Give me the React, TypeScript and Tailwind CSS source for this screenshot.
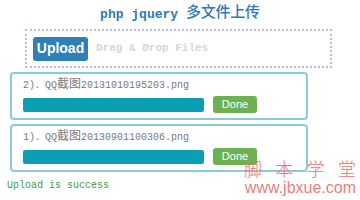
export default function App() {
  const files = [
    { n: "2)", date: "20131010195203" },
    { n: "1)", date: "20130901100306" },
  ];

  return (
    <div className="relative h-[200px] w-[360px] overflow-hidden bg-white">
      <h1 className="flex h-[29px] items-center justify-center font-['Liberation_Mono','Noto_Sans_CJK_SC',monospace] font-bold text-[#2b7bb9]">
        <span className="text-[13px]">php jquery&nbsp;</span>
        <span className="text-[15px] font-medium tracking-[-0.2px]">多文件上传</span>
      </h1>

      <div className="ml-[25px] flex h-[39px] w-[307px] items-center gap-[8px] border-2 border-dotted border-[#bdb8d8] px-[6px]">
        <button className="h-[24px] w-[55px] rounded-[3px] bg-[#2e80b8] font-['Liberation_Sans',sans-serif] text-[14px] font-bold text-white">
          Upload
        </button>
        <span className="font-['Liberation_Mono',monospace] text-[11px] font-bold text-[#d6d6d6]">
          Drag &amp; Drop Files
        </span>
      </div>

      <div className="mt-[4px] flex flex-col gap-[4px]">
        {files.map((f) => (
          <div
            key={f.n}
            className="ml-[10px] h-[48px] w-[298px] rounded-[4px] border-2 border-[#8ccbd5] px-[11px] pt-[3px]"
          >
            <div className="h-[16px] font-['Liberation_Mono','Noto_Sans_CJK_SC',monospace] text-[10px] leading-[16px] text-[#7a7a7a]">
              {f.n}．QQ<span className="text-[12px]">截图</span>
              {f.date}.png
            </div>
            <div className="mt-[3px] flex items-center">
              <div className="h-[14px] w-[181px] rounded-[2px] bg-[#0c9fb4]" />
              <div className="ml-[9px] flex h-[17px] w-[44px] items-center justify-center rounded-[3px] bg-[#6db250] font-['Liberation_Sans',sans-serif] text-[11px] text-white">
                Done
              </div>
            </div>
          </div>
        ))}
      </div>

      <div className="ml-[7px] mt-[6px] font-['Liberation_Mono',monospace] text-[10px] text-[#3f9e3f]">
        Upload is success
      </div>

      <div className="absolute right-[4px] top-[158px] flex w-[114px] flex-col items-end text-[#e57575]">
        <div className="flex w-full justify-between pl-[2px] font-['Noto_Sans_CJK_SC',sans-serif] text-[18px] font-light leading-[21px]">
          <span>脚</span>
          <span>本</span>
          <span>学</span>
          <span>堂</span>
        </div>
        <div className="font-['Liberation_Sans',sans-serif] text-[16px] leading-[18px] text-[#e88080]">
          www.jbxue.com
        </div>
      </div>
    </div>
  );
}
